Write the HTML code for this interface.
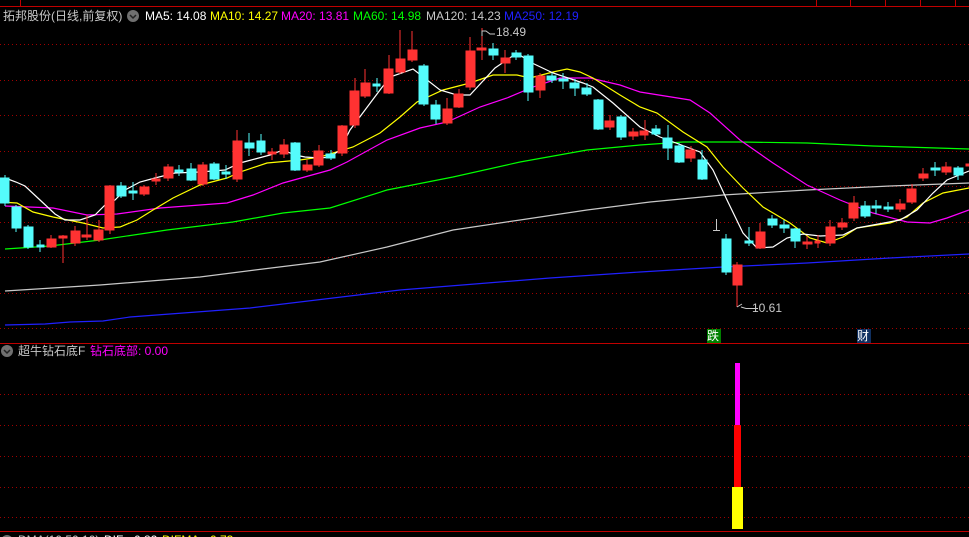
<!DOCTYPE html>
<html><head><meta charset="utf-8"><style>
html,body{margin:0;padding:0;background:#000;width:969px;height:537px;overflow:hidden;position:relative;font-family:"Liberation Sans","Noto Sans CJK SC",sans-serif}
.t{position:absolute;font-size:12px;white-space:nowrap;line-height:14px}
</style></head><body>
<svg width="969" height="537" style="position:absolute;left:0;top:0" xmlns="http://www.w3.org/2000/svg">
<g stroke="#a00000" stroke-width="1" stroke-dasharray="1,3">
<line x1="0" y1="44.5" x2="969" y2="44.5"/><line x1="0" y1="80.5" x2="969" y2="80.5"/><line x1="0" y1="115.5" x2="969" y2="115.5"/><line x1="0" y1="151.5" x2="969" y2="151.5"/><line x1="0" y1="186.5" x2="969" y2="186.5"/><line x1="0" y1="222.5" x2="969" y2="222.5"/><line x1="0" y1="257.5" x2="969" y2="257.5"/><line x1="0" y1="293.5" x2="969" y2="293.5"/><line x1="0" y1="328.5" x2="969" y2="328.5"/>
<line x1="0" y1="394.5" x2="969" y2="394.5"/><line x1="0" y1="425.5" x2="969" y2="425.5"/><line x1="0" y1="456.5" x2="969" y2="456.5"/><line x1="0" y1="487.5" x2="969" y2="487.5"/><line x1="0" y1="517.5" x2="969" y2="517.5"/>
</g>
<g stroke="#c00000" stroke-width="1">
<line x1="0" y1="6.5" x2="969" y2="6.5"/><line x1="0" y1="343.5" x2="969" y2="343.5"/><line x1="0" y1="531.5" x2="969" y2="531.5"/>
<line x1="816.5" y1="0" x2="816.5" y2="6"/><line x1="850.5" y1="0" x2="850.5" y2="6"/><line x1="885.5" y1="0" x2="885.5" y2="6"/><line x1="920.5" y1="0" x2="920.5" y2="6"/><line x1="955.5" y1="0" x2="955.5" y2="6"/>
<line x1="20.5" y1="0" x2="20.5" y2="6"/>
</g>
<g fill="none" stroke-width="1.2">
<polyline stroke="#2020ff" points="5,325 45,324 70,322 103,321 130,317 250,308 400,290 550,278 640,272 723,267 807,263 890,258 969,254"/>
<polyline stroke="#c8c8c8" points="5,291 100,285 200,277 263,269 320,262 387,247 453,230 520,220 587,210 650,202 723,195 807,190 890,186 969,183"/>
<polyline stroke="#00ff00" points="5,249 50,246 100,240 167,230 233,222 283,213 330,208 387,190 453,177 520,162 587,150 640,145 683,142 740,142 807,143 873,146 969,149"/>
<polyline stroke="#ff00ff" points="5,206 53,208 87,215 117,214 160,208 200,205 227,203 253,195 283,183 330,170 347,162 387,140 420,128 447,122 480,107 507,98 533,87 560,78 590,78 620,85 640,92 690,100 710,113 740,140 773,163 807,185 840,200 873,213 907,222 930,223 947,218 969,210"/>
<polyline stroke="#ffff00" points="0,202 17,203 33,212 53,217 83,223 103,228 120,227 137,220 153,210 173,198 200,185 227,178 240,172 267,163 300,160 320,157 353,147 380,133 400,117 417,102 443,90 470,83 493,75 517,75 530,78 553,72 567,69 580,72 593,78 620,95 640,107 657,113 683,132 707,147 723,167 743,188 763,207 790,223 810,238 827,243 843,237 857,228 890,223 907,217 923,203 943,193 969,188"/>
<polyline stroke="#ffffff" points="5,178 16,182 25,186 40,200 55,214 65,220 80,220 95,215 105,205 115,200 125,190 140,182 155,178 175,173 200,172 225,170 240,163 255,159 270,155 283,150 295,155 305,157 320,158 330,157 340,150 350,130 365,110 380,90 390,77 413,69 440,90 457,95 470,95 495,68 517,53 530,62 553,73 583,83 593,87 613,103 640,127 660,137 700,152 713,170 727,200 743,233 757,248 773,247 787,238 803,234 820,236 843,235 857,228 873,225 900,220 917,210 933,193 947,180 969,171"/>
</g>
<g fill="#54fcfc" stroke="#54fcfc">
<line x1="5" y1="175" x2="5" y2="206"/><rect x="0" y="178" width="9" height="25"/>
<line x1="16" y1="205" x2="16" y2="232"/><rect x="12" y="207" width="9" height="21"/>
<line x1="28" y1="225" x2="28" y2="249"/><rect x="24" y="227" width="9" height="20"/>
<line x1="40" y1="240" x2="40" y2="252"/><rect x="37" y="245" width="7" height="2"/>
<line x1="121" y1="182" x2="121" y2="198"/><rect x="117" y="186" width="9" height="10"/>
<line x1="133" y1="182" x2="133" y2="200"/><rect x="129" y="191" width="8" height="2"/>
<line x1="179" y1="165" x2="179" y2="176"/><rect x="175" y="170" width="8" height="2"/>
<line x1="191" y1="163" x2="191" y2="181"/><rect x="187" y="169" width="9" height="11"/>
<line x1="214" y1="162" x2="214" y2="180"/><rect x="210" y="164" width="9" height="15"/>
<line x1="226" y1="165" x2="226" y2="179"/><rect x="222" y="172" width="8" height="2"/>
<line x1="249" y1="133" x2="249" y2="156"/><rect x="245" y="143" width="9" height="5"/>
<line x1="261" y1="134" x2="261" y2="155"/><rect x="257" y="141" width="8" height="11"/>
<line x1="295" y1="142" x2="295" y2="171"/><rect x="291" y="143" width="9" height="27"/>
<line x1="331" y1="150" x2="331" y2="160"/><rect x="326" y="154" width="9" height="4"/>
<line x1="377" y1="78" x2="377" y2="92"/><rect x="373" y="84" width="7" height="2"/>
<line x1="424" y1="64" x2="424" y2="106"/><rect x="419" y="66" width="9" height="38"/>
<line x1="436" y1="100" x2="436" y2="124"/><rect x="431" y="105" width="9" height="14"/>
<line x1="493" y1="43" x2="493" y2="60"/><rect x="489" y="49" width="9" height="6"/>
<line x1="516" y1="50" x2="516" y2="60"/><rect x="512" y="53" width="9" height="4"/>
<line x1="528" y1="54" x2="528" y2="101"/><rect x="524" y="56" width="9" height="36"/>
<line x1="552" y1="73" x2="552" y2="83"/><rect x="547" y="76" width="9" height="4"/>
<line x1="563" y1="73" x2="563" y2="89"/><rect x="559" y="79" width="9" height="2"/>
<line x1="575" y1="79" x2="575" y2="96"/><rect x="570" y="83" width="9" height="5"/>
<line x1="587" y1="83" x2="587" y2="96"/><rect x="582" y="88" width="9" height="6"/>
<line x1="598" y1="99" x2="598" y2="130"/><rect x="594" y="100" width="9" height="29"/>
<line x1="621" y1="115" x2="621" y2="140"/><rect x="617" y="117" width="9" height="20"/>
<line x1="656" y1="125" x2="656" y2="136"/><rect x="652" y="129" width="8" height="5"/>
<line x1="668" y1="125" x2="668" y2="160"/><rect x="663" y="138" width="9" height="10"/>
<line x1="679" y1="143" x2="679" y2="163"/><rect x="675" y="146" width="9" height="16"/>
<line x1="702" y1="150" x2="702" y2="180"/><rect x="698" y="160" width="9" height="19"/>
<line x1="726" y1="234" x2="726" y2="275"/><rect x="722" y="239" width="9" height="33"/>
<line x1="749" y1="227" x2="749" y2="246"/><rect x="745" y="241" width="8" height="2"/>
<line x1="772" y1="215" x2="772" y2="228"/><rect x="768" y="219" width="9" height="6"/>
<line x1="784" y1="220" x2="784" y2="233"/><rect x="780" y="225" width="9" height="3"/>
<line x1="795" y1="228" x2="795" y2="248"/><rect x="791" y="229" width="9" height="12"/>
<line x1="865" y1="201" x2="865" y2="218"/><rect x="861" y="206" width="9" height="10"/>
<line x1="876" y1="200" x2="876" y2="214"/><rect x="872" y="206" width="9" height="2"/>
<line x1="888" y1="202" x2="888" y2="212"/><rect x="884" y="207" width="9" height="2"/>
<line x1="935" y1="162" x2="935" y2="176"/><rect x="931" y="168" width="9" height="2"/>
<line x1="958" y1="166" x2="958" y2="180"/><rect x="954" y="168" width="9" height="7"/>
</g>
<g fill="#ff3232" stroke="#ff3232">
<line x1="51" y1="235" x2="51" y2="248"/><rect x="47" y="239" width="9" height="8"/>
<line x1="63" y1="235" x2="63" y2="263"/><rect x="59" y="236" width="8" height="2"/>
<line x1="75" y1="226" x2="75" y2="246"/><rect x="71" y="231" width="9" height="12"/>
<line x1="87" y1="215" x2="87" y2="240"/><rect x="82" y="235" width="9" height="2"/>
<line x1="99" y1="220" x2="99" y2="242"/><rect x="94" y="230" width="9" height="10"/>
<line x1="110" y1="185" x2="110" y2="234"/><rect x="105" y="186" width="9" height="44"/>
<line x1="144" y1="185" x2="144" y2="196"/><rect x="140" y="187" width="9" height="7"/>
<line x1="156" y1="173" x2="156" y2="185"/><rect x="152" y="179" width="8" height="2"/>
<line x1="168" y1="164" x2="168" y2="181"/><rect x="164" y="167" width="9" height="11"/>
<line x1="203" y1="162" x2="203" y2="186"/><rect x="198" y="165" width="9" height="19"/>
<line x1="237" y1="130" x2="237" y2="182"/><rect x="233" y="141" width="9" height="38"/>
<line x1="272" y1="148" x2="272" y2="160"/><rect x="268" y="152" width="8" height="2"/>
<line x1="284" y1="139" x2="284" y2="158"/><rect x="280" y="145" width="8" height="9"/>
<line x1="307" y1="160" x2="307" y2="172"/><rect x="303" y="165" width="9" height="5"/>
<line x1="319" y1="145" x2="319" y2="167"/><rect x="314" y="151" width="9" height="14"/>
<line x1="342" y1="125" x2="342" y2="156"/><rect x="338" y="126" width="9" height="27"/>
<line x1="355" y1="78" x2="355" y2="128"/><rect x="350" y="91" width="9" height="34"/>
<line x1="365" y1="69" x2="365" y2="98"/><rect x="361" y="83" width="9" height="13"/>
<line x1="389" y1="55" x2="389" y2="94"/><rect x="384" y="69" width="9" height="24"/>
<line x1="400" y1="30" x2="400" y2="74"/><rect x="396" y="59" width="9" height="13"/>
<line x1="412" y1="31" x2="412" y2="62"/><rect x="408" y="50" width="9" height="10"/>
<line x1="447" y1="98" x2="447" y2="125"/><rect x="443" y="109" width="9" height="14"/>
<line x1="459" y1="89" x2="459" y2="108"/><rect x="454" y="94" width="9" height="13"/>
<line x1="470" y1="37" x2="470" y2="90"/><rect x="466" y="51" width="9" height="36"/>
<line x1="482" y1="28" x2="482" y2="60"/><rect x="477" y="48" width="9" height="2"/>
<line x1="505" y1="50" x2="505" y2="73"/><rect x="501" y="58" width="9" height="5"/>
<line x1="540" y1="73" x2="540" y2="98"/><rect x="536" y="76" width="9" height="14"/>
<line x1="610" y1="115" x2="610" y2="130"/><rect x="605" y="121" width="9" height="6"/>
<line x1="633" y1="128" x2="633" y2="140"/><rect x="629" y="132" width="9" height="4"/>
<line x1="645" y1="120" x2="645" y2="140"/><rect x="640" y="131" width="8" height="4"/>
<line x1="691" y1="146" x2="691" y2="162"/><rect x="686" y="150" width="9" height="8"/>
<line x1="737" y1="262" x2="737" y2="307"/><rect x="733" y="265" width="9" height="20"/>
<line x1="760" y1="223" x2="760" y2="249"/><rect x="756" y="232" width="9" height="16"/>
<line x1="807" y1="236" x2="807" y2="249"/><rect x="803" y="242" width="9" height="2"/>
<line x1="818" y1="235" x2="818" y2="248"/><rect x="815" y="241" width="5" height="2"/>
<line x1="830" y1="220" x2="830" y2="246"/><rect x="826" y="227" width="9" height="16"/>
<line x1="842" y1="218" x2="842" y2="230"/><rect x="838" y="223" width="9" height="4"/>
<line x1="854" y1="196" x2="854" y2="221"/><rect x="849" y="203" width="9" height="15"/>
<line x1="900" y1="199" x2="900" y2="212"/><rect x="896" y="204" width="9" height="5"/>
<line x1="912" y1="184" x2="912" y2="204"/><rect x="907" y="189" width="9" height="13"/>
<line x1="923" y1="168" x2="923" y2="181"/><rect x="919" y="174" width="9" height="4"/>
<line x1="946" y1="162" x2="946" y2="175"/><rect x="942" y="167" width="9" height="5"/>
<rect x="966" y="164" width="4" height="2"/>
</g>
<g stroke="#c8c8c8" fill="none" stroke-width="1">
<polyline points="482,36 482,31 486,31 490,34 495,34"/>
<line x1="713" y1="230.5" x2="720" y2="230.5"/><line x1="716.5" y1="219" x2="716.5" y2="230"/>
<polyline points="741,307 746,308.5 758,308.5"/>
<polyline points="737,307 742,304"/>
</g>
<rect x="707" y="329" width="14" height="14" fill="#008000"/>
<rect x="857" y="329" width="14" height="14" fill="#103060"/>
<rect x="735" y="363" width="5" height="62" fill="#ff00ff"/>
<rect x="734" y="425" width="7" height="62" fill="#ff0000"/>
<rect x="732" y="487" width="11" height="42" fill="#ffff00"/>
<circle cx="133" cy="16" r="6" fill="#707070"/><polyline points="130,15 133,18 136,15" stroke="#222" fill="none" stroke-width="1.5"/>
<circle cx="7" cy="351" r="6" fill="#707070"/><polyline points="4,350 7,353 10,350" stroke="#222" fill="none" stroke-width="1.5"/>
<circle cx="7" cy="541" r="6" fill="#707070"/>
</svg>
<div class="t" style="left:3px;top:9px;color:#c8c8c8">拓邦股份(日线,前复权)</div>
<div class="t" style="left:145px;top:9px;color:#fff">MA5: 14.08</div>
<div class="t" style="left:210px;top:9px;color:#ffff00">MA10: 14.27</div>
<div class="t" style="left:281px;top:9px;color:#ff00ff">MA20: 13.81</div>
<div class="t" style="left:353px;top:9px;color:#00ff00">MA60: 14.98</div>
<div class="t" style="left:426px;top:9px;color:#c8c8c8">MA120: 14.23</div>
<div class="t" style="left:504px;top:9px;color:#2020ff">MA250: 12.19</div>
<div class="t" style="left:496px;top:25px;color:#c8c8c8">18.49</div>
<div class="t" style="left:752px;top:301px;color:#c8c8c8">10.61</div>
<div class="t" style="left:707px;top:329px;color:#fff">跌</div>
<div class="t" style="left:857px;top:329px;color:#fff">财</div>
<div class="t" style="left:18px;top:344px;color:#c8c8c8">超牛钻石底F</div>
<div class="t" style="left:90px;top:344px;color:#ff00ff">钻石底部: 0.00</div>
<div class="t" style="left:18px;top:533px;color:#c8c8c8">DMA(10,50,10)</div>
<div class="t" style="left:104px;top:533px;color:#fff">DIF: -0.82</div>
<div class="t" style="left:162px;top:533px;color:#ffff00">DIFMA: -0.73</div>
</body></html>
